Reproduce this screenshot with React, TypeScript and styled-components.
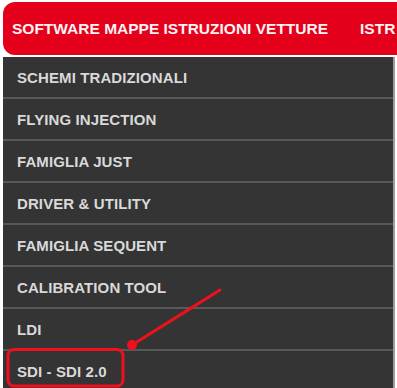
import { FC } from "react";
import styled, { createGlobalStyle } from "styled-components";

const GlobalStyle = createGlobalStyle`
  html, body {
    margin: 0;
    padding: 0;
    background: #ffffff;
  }
  body {
    font-family: "Liberation Sans", Arial, Helvetica, sans-serif;
  }
`;

const Page = styled.div`
  position: relative;
  width: 397px;
  height: 388px;
  overflow: hidden;
  background: #fff;
`;

const NavBar = styled.div`
  display: flex;
  align-items: center;
  gap: 32px;
  height: 53px;
  margin: 2px 0 0 3px;
  padding-left: 9px;
  background-color: #e4001b;
  border-radius: 12px 0 0 12px;
  white-space: nowrap;
  overflow: hidden;
`;

const NavItem = styled.span`
  color: #fff4f4;
  font-size: 15.5px;
  font-weight: bold;
  letter-spacing: 0;
`;

const Menu = styled.ul`
  list-style: none;
  margin: 2px 0 0 3px;
  padding: 0;
  width: 390px;
  background-color: #343434;
  border-right: 2px solid #9c9c9c;
`;

const MenuItem = styled.li<{ $last?: boolean }>`
  display: flex;
  align-items: center;
  height: 40px;
  padding-left: 14px;
  color: #d9d9d9;
  font-size: 15px;
  font-weight: bold;
  letter-spacing: 0.1px;
  border-bottom: ${(p) => (p.$last ? "none" : "2px solid #585858")};
`;

const Annotation = styled.svg`
  position: absolute;
  left: 0;
  top: 0;
  pointer-events: none;
`;

const items = [
  "SCHEMI TRADIZIONALI",
  "FLYING INJECTION",
  "FAMIGLIA JUST",
  "DRIVER & UTILITY",
  "FAMIGLIA SEQUENT",
  "CALIBRATION TOOL",
  "LDI",
  "SDI - SDI 2.0",
];

const App: FC = () => {
  return (
    <Page>
      <GlobalStyle />
      <NavBar>
        <NavItem>SOFTWARE MAPPE ISTRUZIONI VETTURE</NavItem>
        <NavItem>ISTR</NavItem>
      </NavBar>
      <Menu>
        {items.map((item, i) => (
          <MenuItem key={item} $last={i === items.length - 1}>
            {item}
          </MenuItem>
        ))}
      </Menu>
      <Annotation width="397" height="388" viewBox="0 0 397 388">
        <line
          x1="220"
          y1="290"
          x2="132"
          y2="345"
          stroke="#f0101c"
          strokeWidth="3"
          strokeLinecap="round"
        />
        <circle cx="132" cy="345" r="5" fill="#f0101c" />
        <rect
          x="8"
          y="349.5"
          width="115"
          height="36.5"
          rx="6"
          fill="none"
          stroke="#f0101c"
          strokeWidth="3"
        />
      </Annotation>
    </Page>
  );
};

export default App;
